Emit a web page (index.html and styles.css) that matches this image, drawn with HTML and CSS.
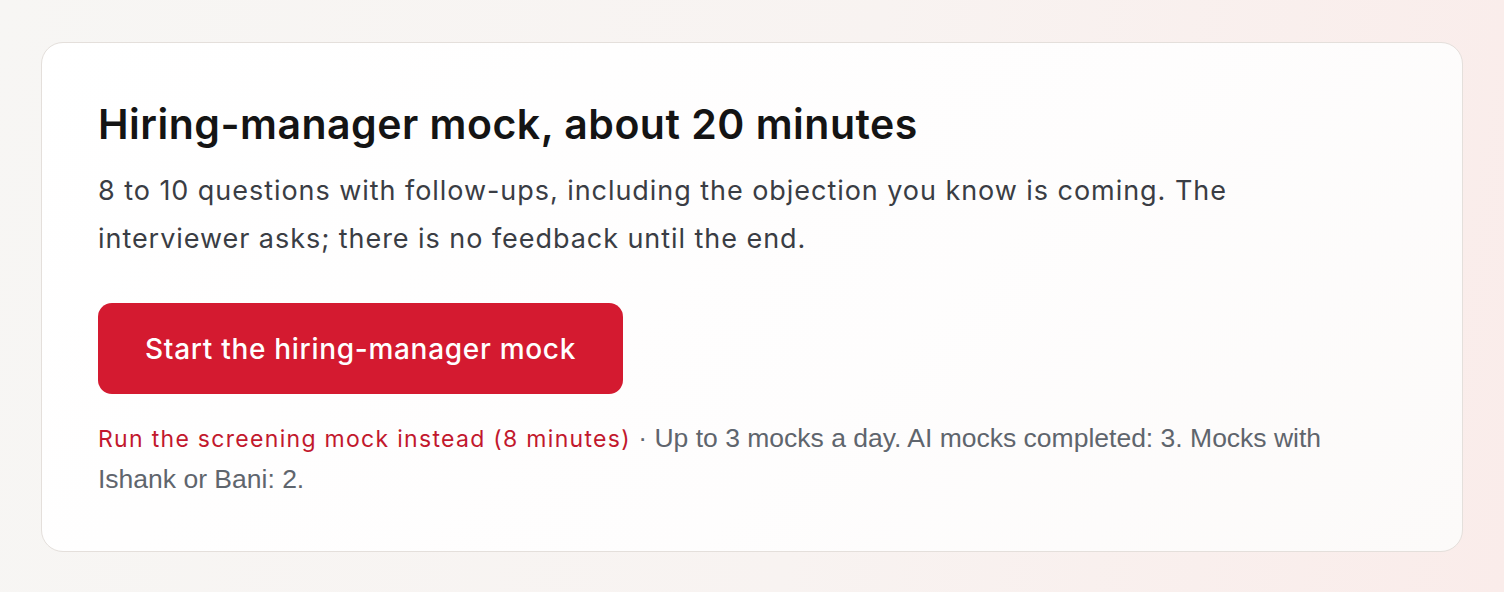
FILE: index.html
```html
<!DOCTYPE html>
<html lang="en">
<head>
<meta charset="UTF-8"><meta name="viewport" content="width=device-width, initial-scale=1">
<title>Hiring-manager mock</title>
<link rel="stylesheet" href="styles.css">
</head>
<body>
  <div class="card">
    <h1>Hiring-manager mock, about 20 minutes</h1>
    <p class="lead">8 to 10 questions with follow-ups, including the objection you know is coming. The interviewer asks; there is no feedback until the end.</p>
    <button class="btn">Start the hiring-manager mock</button>
    <p class="note"><a href="#" class="alt">Run the screening mock instead (8 minutes)</a> · Up to 3 mocks a day. AI mocks completed: 3. Mocks with Ishank or Bani: 2.</p>
  </div>
</body>
</html>
```
FILE: styles.css
```css
html{height:100%}
body{margin:0;min-height:100%;padding:42px 41px;box-sizing:border-box;background:linear-gradient(100deg,#f7f6f4 0%,#f8f3f1 55%,#faecea 100%);font-family:Inter,"Noto Sans",sans-serif;color:#141414}
.card{border:1.5px solid #e4dfdb;border-radius:22px;padding:57px 56px 52px;background:linear-gradient(135deg,#ffffff 0%,#fefdfd 60%,#fcfaf9 100%)}
h1{margin:0;font-size:41px;font-weight:600;line-height:1.2;letter-spacing:0.5px}
.lead{margin:18px 0 0;font-size:27px;line-height:48px;color:#3a3d44;letter-spacing:0.95px;max-width:1190px}
.btn{display:block;margin-top:40px;padding:0 47px;height:91px;border:none;border-radius:14px;background:#d41a30;color:#fff;font-family:inherit;font-size:28px;font-weight:500;letter-spacing:0.7px;cursor:pointer}
.note{margin:24px 0 0;font-family:"Liberation Sans",Arial,sans-serif;font-size:26.5px;line-height:40px;color:#5f656d;max-width:1260px}
.alt{font-family:Inter,"Noto Sans",sans-serif;font-size:23px;letter-spacing:1.3px;color:#c2182d;text-decoration:none}
```
